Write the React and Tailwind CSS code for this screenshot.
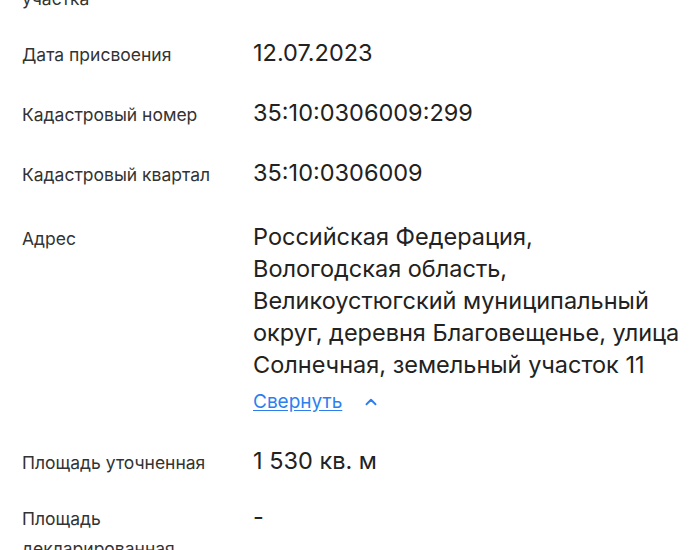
import { ChevronUp } from 'lucide-react'

const rows = [
  { label: 'Дата присвоения', value: '12.07.2023' },
  { label: 'Кадастровый номер', value: '35:10:0306009:299' },
  { label: 'Кадастровый квартал', value: '35:10:0306009' },
  {
    label: 'Адрес',
    value:
      'Российская Федерация, Вологодская область, Великоустюгский муниципальный округ, деревня Благовещенье, улица Солнечная, земельный участок 11',
    collapsible: true,
  },
  { label: 'Площадь уточненная', value: '1 530 кв. м' },
  { label: 'Площадь декларированная', value: '-', className: '-mt-1' },
]

function Row({ label, value, collapsible, className = '' }) {
  return (
    <div className={`flex ${collapsible ? 'mt-1' : ''} ${className}`}>
      <div className="w-[231px] shrink-0 pr-4 pt-[3px] text-[17.5px] leading-[30px] text-[#333]">
        {label}
      </div>
      <div className="flex-1 min-w-0 text-[23.5px] leading-8 text-[#222]">
        <div>{value}</div>
        {collapsible && (
          <button className="mt-[5px] flex items-center gap-5 text-[19px] text-[#2d7ff0]">
            <span className="underline underline-offset-2">Свернуть</span>
            <ChevronUp size={18} strokeWidth={2.5} />
          </button>
        )}
      </div>
    </div>
  )
}

export default function App() {
  return (
    <div
      className="h-[550px] w-[700px] overflow-hidden bg-white pl-[22px] pr-4"
      style={{ fontFamily: 'Inter, "Noto Sans", sans-serif' }}
    >
      <div className="-mt-[49px] flex flex-col gap-[27px]">
        {/* previous field, only its last line is visible */}
        <div className="-mb-1 flex">
          <div className="w-[231px] shrink-0 pr-4 pt-[3px] text-[17.5px] leading-[30px] text-[#333]">
            Назначение земельного участка
          </div>
        </div>
        {rows.map((r) => (
          <Row key={r.label} {...r} />
        ))}
      </div>
    </div>
  )
}
